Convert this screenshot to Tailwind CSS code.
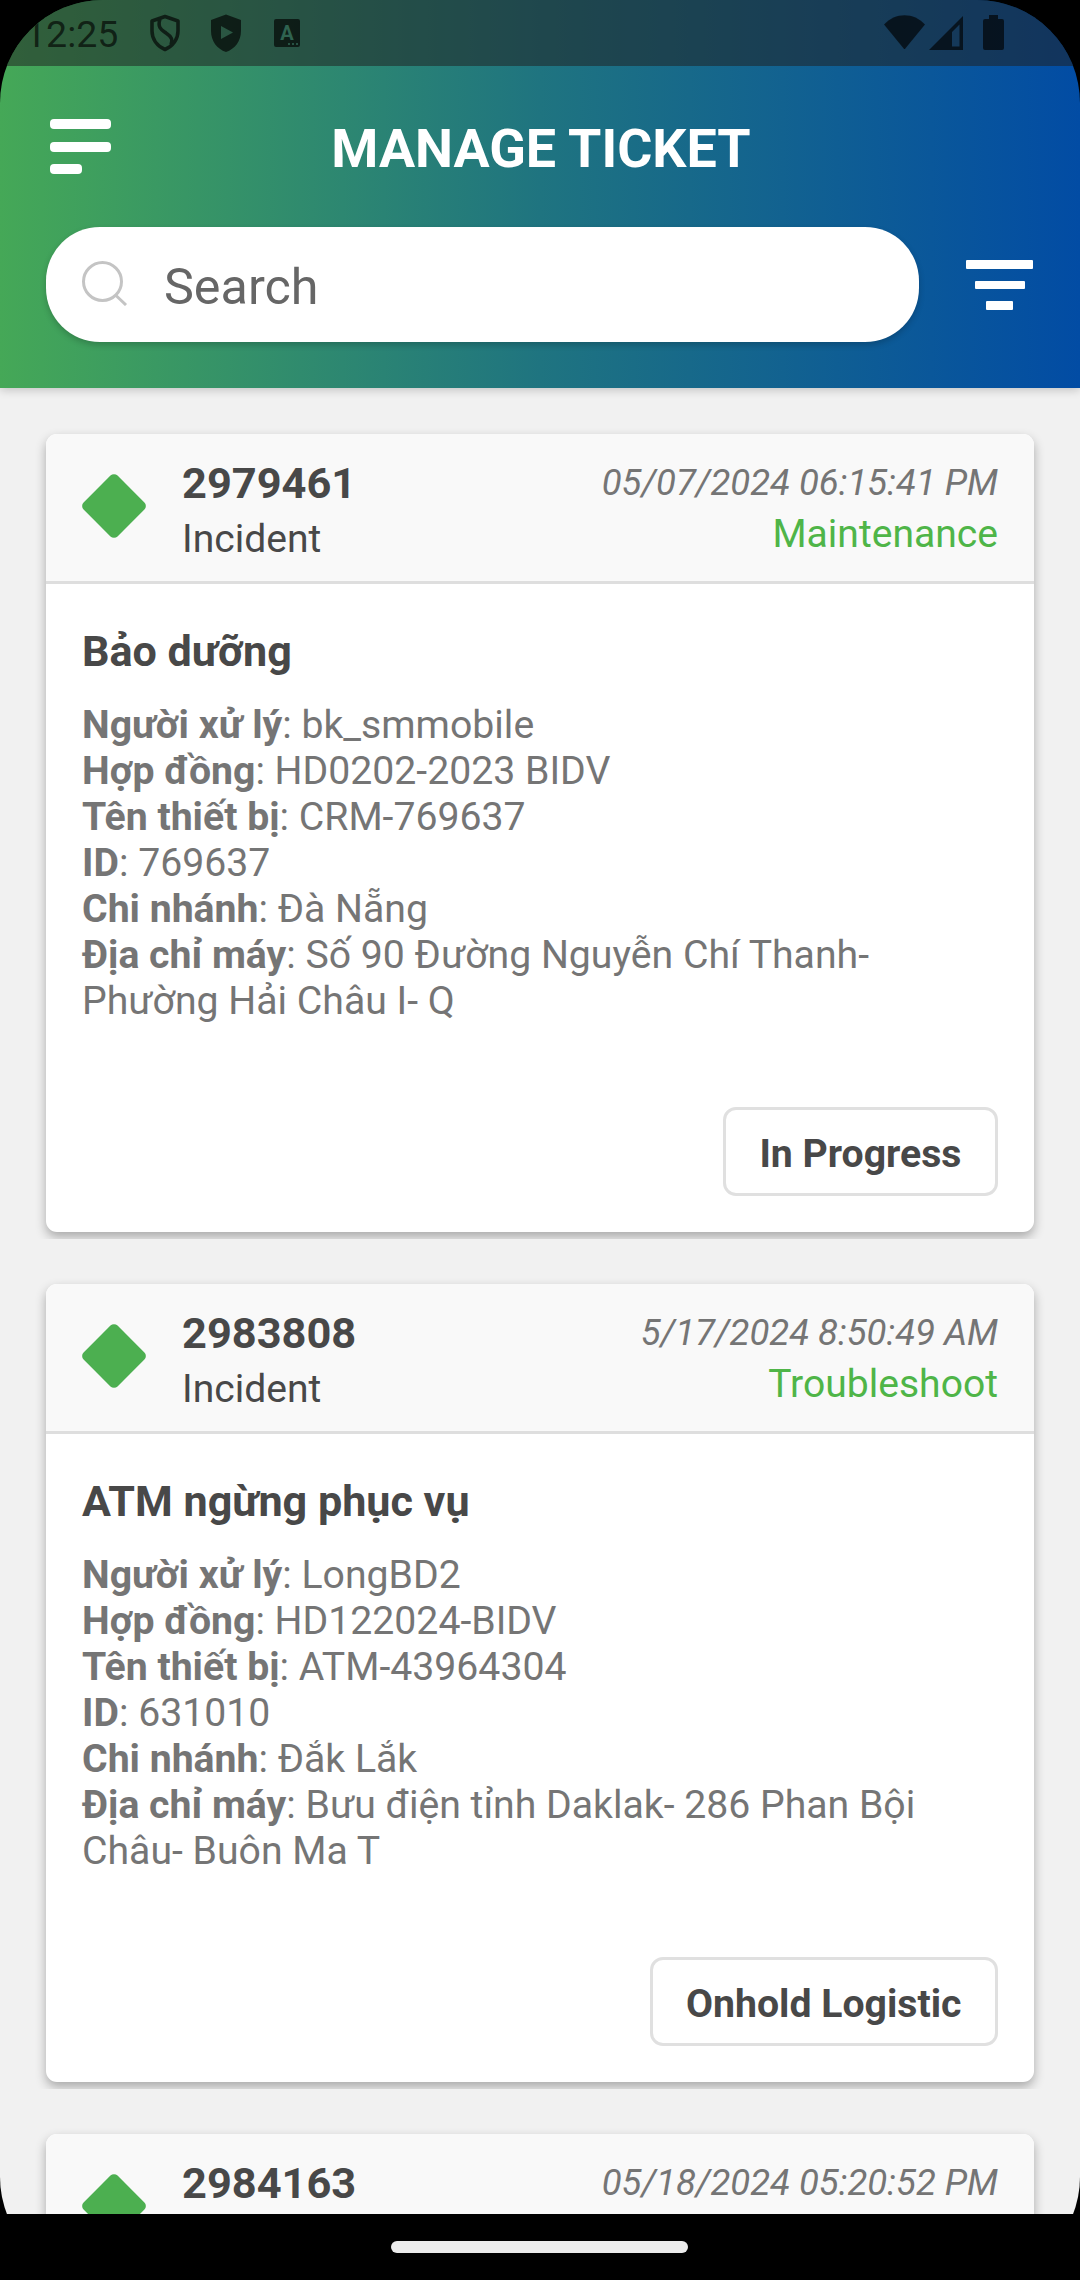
<!DOCTYPE html>
<html lang="vi">
<head>
  <meta charset="UTF-8" />
  <meta name="viewport" content="width=device-width, initial-scale=1" />
  <title>Manage Ticket</title>
  <script src="https://cdn.jsdelivr.net/npm/@tailwindcss/browser@4"></script>
</head>
<body class="bg-black">
  <div class="w-[1080px] h-[2280px] rounded-[103px] overflow-hidden flex flex-col font-[Roboto,sans-serif] text-[#484848]">

    <header class="relative z-10 shrink-0 h-[388px] bg-linear-to-r/srgb from-[#45a857] via-[#1f7480] to-[#024ca4] shadow-[0_2px_9px_rgba(0,0,0,0.2)]">
      <!-- status bar -->
      <div class="h-[66px] bg-[#202020]/53 flex items-start justify-between pl-[25px] pr-[76px] text-black/65">
        <div class="flex items-start">
          <span class="w-[125px] text-[37.500px] leading-[46px] pt-[11px]">12:25</span>
          <svg class="w-[30px] h-[38px] mt-[14px]" viewBox="0 0 30 38" fill="none" stroke="currentColor" stroke-width="3.6" stroke-linejoin="round">
            <path d="M15 2.500 L28 7 V17 C28 25 23 32 15 35.500 C7 32 2 25 2 17 V7 Z M10 5 C7 14 12 16 16 19 C22 23 23 26 21 31" />
          </svg>
          <svg class="w-[30px] h-[38px] mt-[14px] ml-[31px]" viewBox="0 0 30 38" fill="currentColor">
            <path fill-rule="evenodd" d="M15 0.500 L30 6 V17 C30 27 24 35 15 38 C6 35 0 27 0 17 V6 Z M10 12 V25 L22 18.500 Z" />
          </svg>
          <span class="relative w-[26px] h-[28px] mt-[19px] ml-[33px]">
            <svg class="w-[26px] h-[28px]" viewBox="0 0 26 28" fill="currentColor">
              <path fill-rule="evenodd" d="M2 0 H24 Q26 0 26 2 V26 Q26 28 24 28 H2 Q0 28 0 26 V2 Q0 0 2 0 Z M14 24 V26 H16 V24 Z M18 24 V26 H20 V24 Z M22 24 V26 H24 V24 Z" />
            </svg>
            <span class="absolute inset-x-0 top-[3px] text-center text-[20px] leading-[22px] font-bold text-[#2f6350]">A</span>
          </span>
        </div>
        <div class="flex items-start">
          <svg class="w-[41px] h-[34px] mt-[15px]" viewBox="0 0 41 34" fill="currentColor">
            <path d="M0 9.500 C11 -3 30 -3 41 9.500 L20.500 34.500 Z" />
          </svg>
          <svg class="w-[34px] h-[34px] mt-[16px] ml-[4px]" viewBox="0 0 34 34" fill="currentColor">
            <path fill-rule="evenodd" d="M0 34 L34 0 V34 Z M23 16 V30.500 H30.500 V8.500 Z" />
          </svg>
          <svg class="w-[21px] h-[35px] mt-[15px] ml-[20px]" viewBox="0 0 21 35" fill="currentColor">
            <path d="M6 0 H15 V4 H19 Q21 4 21 6 V33 Q21 35 19 35 H2 Q0 35 0 33 V6 Q0 4 2 4 H6 Z" />
          </svg>
        </div>
      </div>

      <div class="flex items-start h-[161px]">
        <button type="button" class="w-[61px] ml-[50px] mt-[53px] flex flex-col gap-[12.500px]" aria-label="Menu">
          <span class="w-[61px] h-[10px] rounded-[4px] bg-white"></span>
          <span class="w-[61px] h-[10px] rounded-[4px] bg-white"></span>
          <span class="w-[32px] h-[10px] rounded-[4px] bg-white"></span>
        </button>
        <h1 class="flex-1 pt-[50px] pr-[109px] text-center text-[53.800px] leading-[66px] font-bold text-white">MANAGE TICKET</h1>
      </div>

      <div class="flex items-start pl-[46px]">
        <div class="w-[873px] h-[115px] rounded-[54px] bg-white flex items-start shadow-[0_3px_6px_rgba(0,0,0,0.2)]">
          <svg class="w-[46px] h-[46px] ml-[36px] mt-[33px]" viewBox="0 0 46 46" fill="none" stroke="#c4c4c4" stroke-width="3">
            <circle cx="20.500" cy="21.500" r="19" />
            <path d="M34 35.500 L44 45" />
          </svg>
          <span class="ml-[36px] mt-[27px] text-[50.300px] leading-[66px] text-[#666]">Search</span>
        </div>
        <button type="button" class="w-[67px] ml-[47px] mt-[33px] flex flex-col items-center gap-[12px]" aria-label="Filter">
          <span class="w-[67px] h-[8.500px] rounded-[1px] bg-white"></span>
          <span class="w-[50px] h-[8.500px] rounded-[1px] bg-white"></span>
          <span class="w-[27px] h-[8.500px] rounded-[1px] bg-white"></span>
        </button>
      </div>
    </header>

    <main id="tickets" class="h-[1826px] shrink-0 overflow-hidden pt-[23px] bg-[#f1f1f1]"></main>

    <!-- gesture bar -->
    <footer class="h-[66px] shrink-0 bg-black flex justify-center items-start pt-[27px]">
      <span class="w-[297px] h-[12px] mr-[2px] rounded-full bg-[#ececec]"></span>
    </footer>
  </div>

  <script>
    const tickets = [
      {
        id: "2979461",
        type: "Incident",
        time: "05/07/2024 06:15:41 PM",
        category: "Maintenance",
        title: "Bảo dưỡng",
        handler: "bk_smmobile",
        contract: "HD0202-2023 BIDV",
        device: "CRM-769637",
        deviceId: "769637",
        branch: "Đà Nẵng",
        address: "Số 90 Đường Nguyễn Chí Thanh- Phường Hải Châu I- Q",
        status: "In Progress"
      },
      {
        id: "2983808",
        type: "Incident",
        time: "5/17/2024 8:50:49 AM",
        category: "Troubleshoot",
        title: "ATM ngừng phục vụ",
        handler: "LongBD2",
        contract: "HD122024-BIDV",
        device: "ATM-43964304",
        deviceId: "631010",
        branch: "Đắk Lắk",
        address: "Bưu điện tỉnh Daklak- 286 Phan Bội Châu- Buôn Ma T",
        status: "Onhold Logistic"
      },
      {
        id: "2984163",
        type: "",
        time: "05/18/2024 05:20:52 PM",
        category: ""
      }
    ];

    function ticketBody(t) {
      if (!t.title) return '';
      return `
        <h2 class="mt-[43px] text-[43.100px] leading-[50px] font-bold">${t.title}</h2>
        <div class="mt-[25px] text-[39.200px] leading-[46px] text-[#757575]">
          <p><b>Người xử lý</b>: ${t.handler}</p>
          <p><b>Hợp đồng</b>: ${t.contract}</p>
          <p><b>Tên thiết bị</b>: ${t.device}</p>
          <p><b>ID</b>: ${t.deviceId}</p>
          <p><b>Chi nhánh</b>: ${t.branch}</p>
          <p><b>Địa chỉ máy</b>: ${t.address}</p>
        </div>
        <div class="mt-auto mb-[36px] flex justify-end">
          <span class="h-[89px] px-[33.500px] pt-[21px] border-3 border-[#e0e0e0] rounded-[13px] text-[39.200px] leading-[46px] font-bold">${t.status}</span>
        </div>`;
    }

    // the outer wrapper clips each card's shadow a few pixels below it
    document.getElementById('tickets').innerHTML = tickets.map(t => `
      <div class="h-[828px] mb-[22px] px-[46px] pt-[23px] overflow-hidden">
        <article class="h-[798px] rounded-[11px] bg-white flex flex-col shadow-[0_5px_11px_rgba(0,0,0,0.3)]">
          <div class="h-[150px] shrink-0 box-border border-b-3 border-[#dedede] rounded-t-[11px] bg-[#f9f9f9] flex items-start px-[36px]">
            <svg class="w-[64px] h-[64px] mt-[40px]" viewBox="0 0 64 64">
              <rect x="8" y="8" width="48" height="48" rx="5" transform="rotate(45 32 32)" fill="#4caf50" />
            </svg>
            <div class="ml-[36px] mt-[25px] flex-1">
              <div class="text-[43.400px] leading-[50px] font-bold">${t.id}</div>
              <div class="mt-[7px] text-[39.100px] leading-[46px]">${t.type}</div>
            </div>
            <div class="mt-[27px] text-right">
              <div class="text-[36.500px] leading-[43px] italic text-[#757575]">${t.time}</div>
              <div class="mt-[7px] text-[39.100px] leading-[46px] text-[#4fb548]">${t.category}</div>
            </div>
          </div>
          <div class="flex-1 flex flex-col px-[36px]">${ticketBody(t)}</div>
        </article>
      </div>`).join('');
  </script>
</body>
</html>
